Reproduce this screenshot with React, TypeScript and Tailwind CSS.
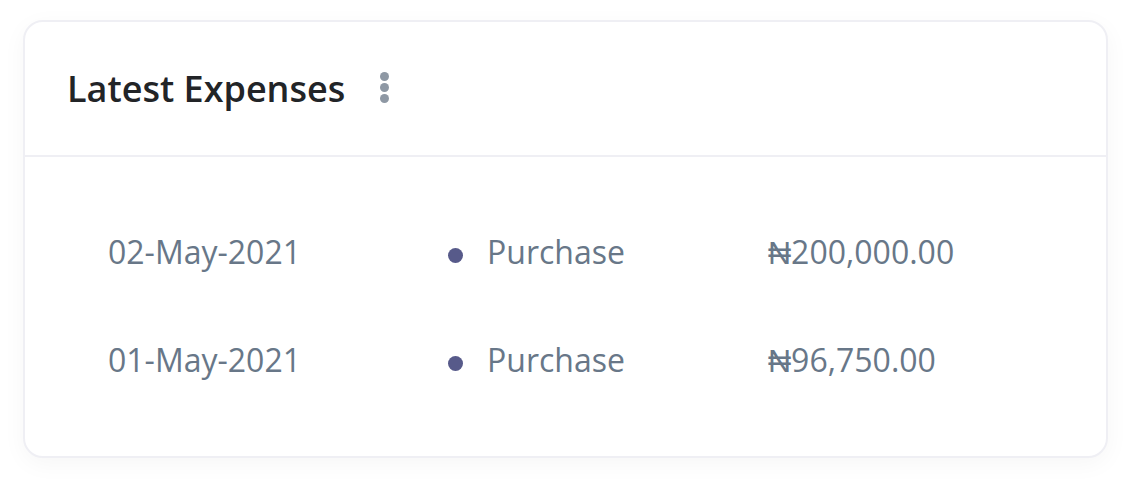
export default function App() {
  const rows = [
    { date: "02-May-2021", type: "Purchase", amount: "₦200,000.00" },
    { date: "01-May-2021", type: "Purchase", amount: "₦96,750.00" },
  ];
  return (
    <div className="w-[1132px] h-[482px] bg-white pt-[20px] pl-[23px]" style={{ fontFamily: '"Open Sans", sans-serif' }}>
      <div className="w-[1085px] h-[438px] rounded-[20px] border-2 border-[#efeff4] bg-white shadow-[0_6px_24px_rgba(0,0,0,0.04)] flex flex-col">
        <div className="h-[135px] shrink-0 flex items-center pl-[42px] border-b-2 border-[#efeff4]">
          <h2 className="text-[36px] font-semibold text-[#222427] leading-none">Latest Expenses</h2>
          <div className="ml-[35px] flex flex-col gap-[2px] mt-[-2px]">
            <span className="w-[9px] h-[9px] rounded-full bg-[#8e98a4]" />
            <span className="w-[9px] h-[9px] rounded-full bg-[#8e98a4]" />
            <span className="w-[9px] h-[9px] rounded-full bg-[#8e98a4]" />
          </div>
        </div>
        <div className="pl-[83px] pt-[41px]">
          {rows.map((r) => (
            <div key={r.date} className="h-[108px] flex items-center text-[32px] text-[#687788]">
              <div className="w-[340px]">{r.date}</div>
              <div className="w-[320px] flex items-center">
                <span className="w-[15px] h-[15px] rounded-full bg-[#575a8a] mr-[24px] mt-[6px]" />
                <span>{r.type}</span>
              </div>
              <div>{r.amount}</div>
            </div>
          ))}
        </div>
      </div>
    </div>
  );
}
